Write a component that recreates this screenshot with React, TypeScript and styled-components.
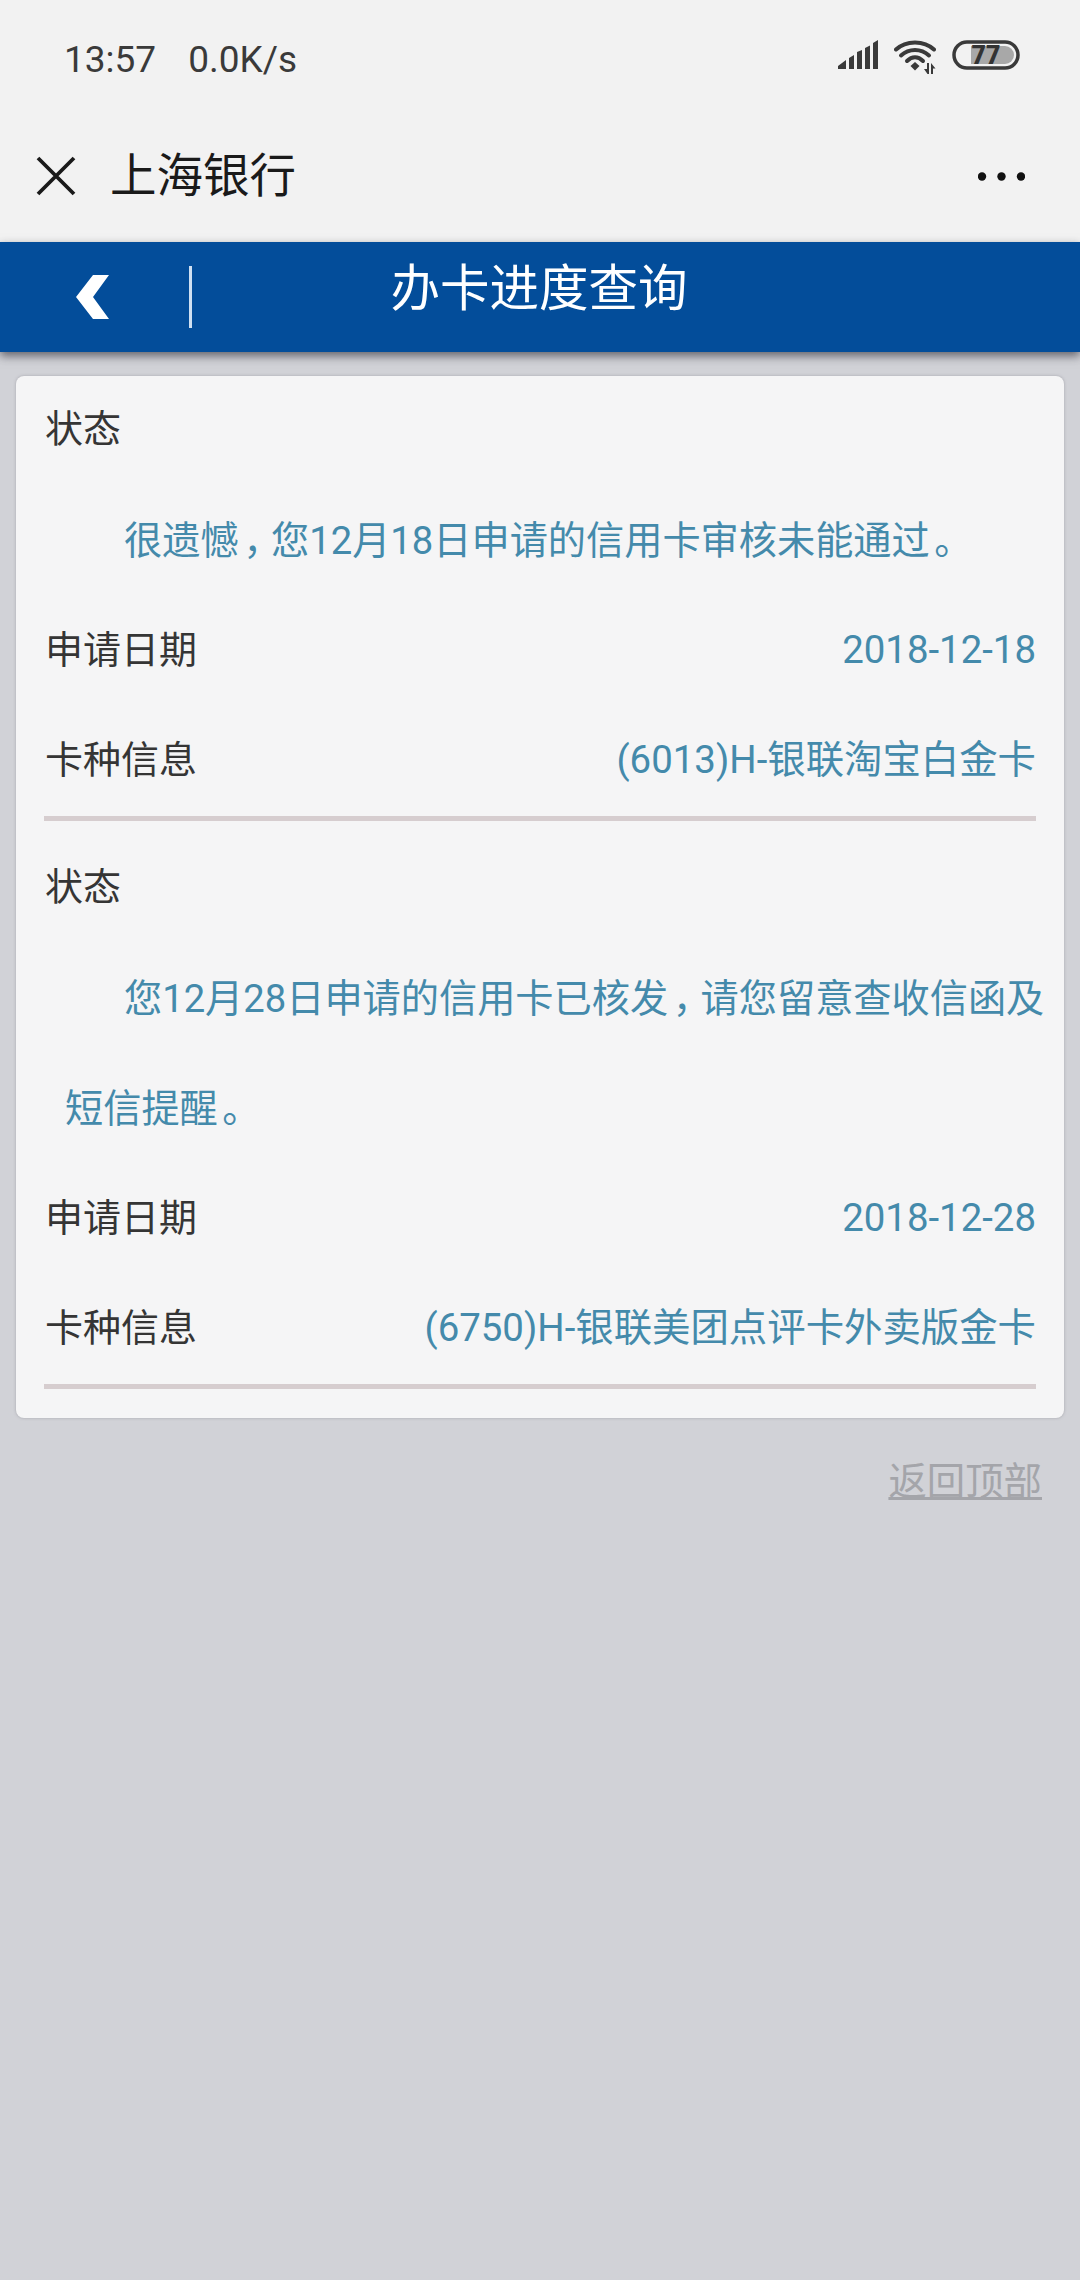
import styled, { createGlobalStyle } from "styled-components";

const GlobalStyle = createGlobalStyle`
  html, body {
    margin: 0;
    padding: 0;
    background: #d1d2d7;
  }
  body {
    font-family: Roboto, "Noto Sans CJK SC", sans-serif;
  }
`;

const Page = styled.div`
  width: 1080px;
  height: 2280px;
  overflow: hidden;
  background: #d1d2d7;
`;

const StatusBar = styled.div`
  height: 118px;
  box-sizing: border-box;
  padding: 0 60px 0 64px;
  background: #f2f2f2;
  display: flex;
  align-items: center;
  justify-content: space-between;
  color: #3a3a3a;
  font-size: 37px;
`;

const StatusLeft = styled.div`
  display: flex;
  gap: 32px;
`;

const StatusIcons = styled.div`
  display: flex;
  align-items: flex-start;
  gap: 16px;
  height: 34px;
  margin-top: -4px;
`;

const NavBar = styled.div`
  height: 124px;
  background: #f2f2f2;
  box-sizing: border-box;
  padding: 0 55px 8px 36px;
  display: flex;
  align-items: center;
  color: #1a1a1a;
`;

const NavTitle = styled.div`
  font-size: 46.5px;
  line-height: 50px;
  margin-left: 34px;
  flex: 1;
`;

const Header = styled.div`
  position: relative;
  height: 110px;
  background: #034d9a;
  box-shadow: 0 4px 9px rgba(40, 40, 50, 0.65);
  display: flex;
  align-items: center;
`;

const BackCell = styled.div`
  width: 192px;
  height: 62px;
  box-sizing: border-box;
  border-right: 3px solid #cfe0f2;
  padding-left: 76px;
  display: flex;
  align-items: center;
`;

const HeaderTitle = styled.div`
  width: 694px;
  margin-top: -17px;
  text-align: center;
  color: #fff;
  font-size: 49.5px;
  line-height: 60px;
`;

const Card = styled.div`
  margin: 24px 16px 0;
  padding: 0 28px 0 29px;
  background: #f5f5f6;
  border-radius: 8px;
  box-shadow: 0 0 3px rgba(120, 120, 130, 0.5);
  height: 1042px;
  box-sizing: border-box;
`;

const Section = styled.div`
  padding-bottom: 13px;
`;

const Row = styled.div`
  height: 110px;
  display: flex;
  align-items: baseline;
  justify-content: space-between;
  font-size: 38px;
  line-height: 107px;
  color: #353535;
`;

const Value = styled.span`
  color: #448aab;
  font-size: 38.4px;
`;

const Paragraph = styled.div`
  font-size: 38.2px;
  line-height: 110px;
  color: #448aab;
  padding-left: 20px;
  margin-right: -12px;
  text-indent: 59px;
`;

const Mark = styled.span`
  display: inline-block;
  box-sizing: border-box;
  width: 0.85em;
  padding-left: 0.12em;
  text-indent: 0;
  white-space: nowrap;
  font-feature-settings: "halt";
`;

const Divider = styled.div`
  height: 5px;
  margin: 0 0 0 -1px;
  background: #d6cdcf;
`;

const TopRow = styled.div`
  display: flex;
  justify-content: flex-end;
  padding: 32px 38px 0 0;
`;

const TopLink = styled.a`
  font-size: 38.4px;
  color: #a4a5aa;
  text-decoration: underline;
`;

const SignalIcon = () => (
  <svg width="40" height="29" viewBox="0 0 40 29">
    <path
      d="M0 29v-3l8-6v9zM11 29V18l5-3v14zM19 29V12l5-2v19zM27 29V8l5-2.500V29zM35 29V3l5-3v29z"
      fill="#3a3a3a"
    />
  </svg>
);

const WifiIcon = () => (
  <svg width="42" height="34" viewBox="0 0 42 34">
    <g fill="none" stroke="#3a3a3a" strokeWidth="4" strokeLinecap="round">
      <path d="M2 9.500C12 0 30 0 40 9.500" />
      <path d="M7 15.500C15 8 27 8 35 15.500" />
      <path d="M13 21C18 16 24 16 29 21" />
    </g>
    <path d="M16.500 26l4.500-4 4.500 4-4.500 4.500z" fill="#3a3a3a" />
    <path d="M35 23v11h-1.500l-3.500-5h3v-6zM37 34V23l4.500 5.500h-2.500V34z" fill="#3a3a3a" />
  </svg>
);

const BatteryIcon = () => (
  <svg width="68" height="30" viewBox="0 0 68 30">
    <rect x="2" y="2" width="64" height="26" rx="13" fill="none" stroke="#3a3a3a" strokeWidth="3.500" />
    <path d="M19 6h34a9 9 0 0 1 0 18H19z" fill="#a8a8a8" />
    <text
      x="34"
      y="24"
      textAnchor="middle"
      fontFamily="Roboto, sans-serif"
      fontWeight="900"
      fontSize="25"
      fill="#333"
    >
      77
    </text>
  </svg>
);

const CloseIcon = () => (
  <svg width="40" height="40" viewBox="0 0 40 40">
    <path d="M2 2L38 38M38 2L2 38" stroke="#1a1a1a" strokeWidth="3.800" fill="none" />
  </svg>
);

const MoreIcon = () => (
  <svg width="47" height="9" viewBox="0 0 47 9">
    <circle cx="4" cy="4.500" r="4.200" fill="#111" />
    <circle cx="23.500" cy="4.500" r="4.200" fill="#111" />
    <circle cx="43" cy="4.500" r="4.200" fill="#111" />
  </svg>
);

const BackIcon = () => (
  <svg width="33" height="44" viewBox="0 0 33 44">
    <path d="M17 0H33L17 22L33 44H17L0 22Z" fill="#fff" />
  </svg>
);

type Application = {
  message: string;
  date: string;
  card: string;
};

const applications: Application[] = [
  {
    message: "很遗憾，您12月18日申请的信用卡审核未能通过。",
    date: "2018-12-18",
    card: "(6013)H-银联淘宝白金卡",
  },
  {
    message: "您12月28日申请的信用卡已核发，请您留意查收信函及短信提醒。",
    date: "2018-12-28",
    card: "(6750)H-银联美团点评卡外卖版金卡",
  },
];

// the phone's font centres punctuation in its cell, Noto keeps it to the left
const renderMessage = (message: string) =>
  message
    .split(/([，。])/)
    .map((part, i) => (part === "，" || part === "。" ? <Mark key={i}>{part}</Mark> : part));

export default function App(): JSX.Element {
  return (
    <Page>
      <GlobalStyle />
      <StatusBar>
        <StatusLeft>
          <span>13:57</span>
          <span>0.0K/s</span>
        </StatusLeft>
        <StatusIcons>
          <SignalIcon />
          <WifiIcon />
          <BatteryIcon />
        </StatusIcons>
      </StatusBar>
      <NavBar>
        <CloseIcon />
        <NavTitle>上海银行</NavTitle>
        <MoreIcon />
      </NavBar>
      <Header>
        <BackCell>
          <BackIcon />
        </BackCell>
        <HeaderTitle>办卡进度查询</HeaderTitle>
      </Header>
      <Card>
        {applications.map((item) => (
          <Section key={item.date}>
            <Row>状态</Row>
            <Paragraph>{renderMessage(item.message)}</Paragraph>
            <Row>
              申请日期
              <Value>{item.date}</Value>
            </Row>
            <Row>
              卡种信息
              <Value>{item.card}</Value>
            </Row>
            <Divider />
          </Section>
        ))}
      </Card>
      <TopRow>
        <TopLink>返回顶部</TopLink>
      </TopRow>
    </Page>
  );
}
